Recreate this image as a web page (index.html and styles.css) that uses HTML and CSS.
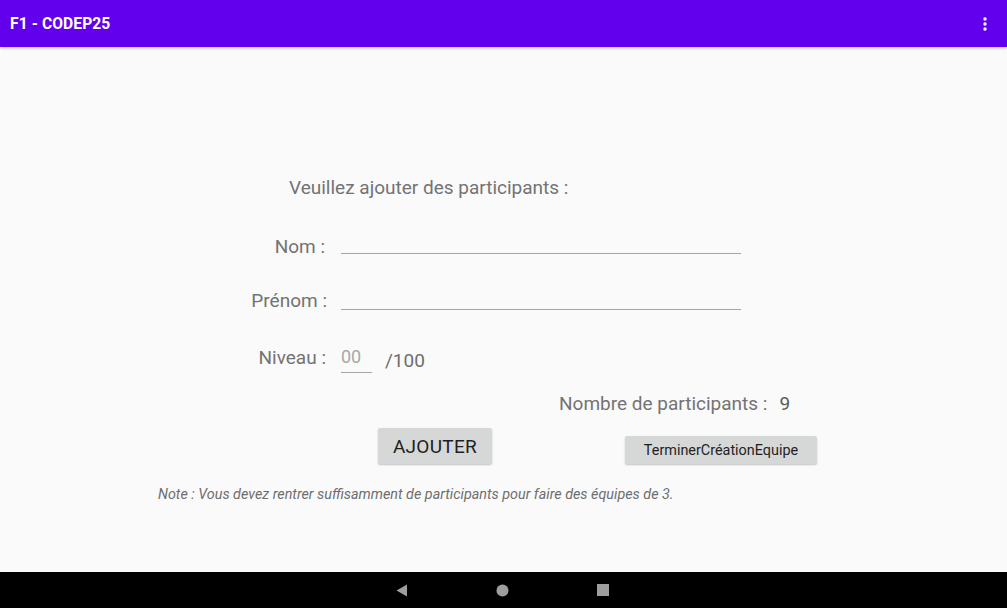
FILE: index.html
```html
<!DOCTYPE html>
<html lang="fr">
<head>
<meta charset="utf-8">
<title>F1 - CODEP25</title>
<link rel="stylesheet" href="styles.css">
</head>
<body>
<div class="screen">
  <header class="appbar">
    <span class="appbar-title">F1 - CODEP25</span>
    <svg class="appbar-menu" width="6" height="14" viewBox="0 0 6 14"><circle cx="3" cy="2" r="1.7" fill="#fff"/><circle cx="3" cy="7" r="1.7" fill="#fff"/><circle cx="3" cy="12" r="1.7" fill="#fff"/></svg>
  </header>
  <main class="content">
    <div class="heading">Veuillez ajouter des participants :</div>
    <div class="row row-nom">
      <span class="label">Nom :</span>
      <span class="field field-nom"></span>
    </div>
    <div class="row row-prenom">
      <span class="label">Prénom :</span>
      <span class="field field-prenom"></span>
    </div>
    <div class="row row-niveau">
      <span class="label">Niveau :</span>
      <span class="field field-niveau">00</span>
      <span class="max">/100</span>
    </div>
    <div class="row row-count">
      <span class="count-label">Nombre de participants :</span>
      <span class="count-value">9</span>
    </div>
    <div class="row row-buttons">
      <span class="btn btn-add">AJOUTER</span>
      <span class="btn btn-finish">TerminerCréationEquipe</span>
    </div>
    <div class="note">Note : Vous devez rentrer suffisamment de participants pour faire des équipes de 3.</div>
  </main>
  <nav class="navbar">
    <svg width="12" height="13" viewBox="0 0 12 13"><polygon points="11,0.5 11,12.5 0.5,6.5" fill="#9e9e9e"/></svg>
    <svg width="13" height="13" viewBox="0 0 13 13"><circle cx="6.5" cy="6.5" r="6" fill="#9e9e9e"/></svg>
    <svg width="12" height="12" viewBox="0 0 12 12"><rect x="0" y="0" width="12" height="12" fill="#9e9e9e"/></svg>
  </nav>
</div>
</body>
</html>
```

FILE: styles.css
```css
* { box-sizing: border-box; }
html, body { margin: 0; padding: 0; }
body {
  font-family: Roboto, "Liberation Sans", sans-serif;
  background: #fafafa;
}
.screen {
  width: 1007px;
  height: 608px;
  display: flex;
  flex-direction: column;
  overflow: hidden;
}
.appbar {
  height: 47px;
  flex: 0 0 47px;
  background: #6200ee;
  display: flex;
  align-items: center;
  justify-content: space-between;
  padding: 0 19px 0 10px;
  box-shadow: 0 1px 3px rgba(0,0,0,0.25);
  position: relative;
  z-index: 1;
}
.appbar-title {
  color: #fff;
  font-size: 15.6px;
  font-weight: 700;
  letter-spacing: 0.1px;
}
.content {
  flex: 1;
  background: #fafafa;
  padding-top: 129px;
  color: #737373;
  font-size: 19px;
}
.heading {
  margin-left: 289px;
  height: 24px;
  line-height: 24px;
}
.row {
  display: flex;
  align-items: flex-start;
}
.label {
  width: 327px;
  text-align: right;
  line-height: 24px;
  height: 24px;
  margin-right: 14px;
}
.field {
  display: block;
  border-bottom: 1px solid #a6a6a6;
}
.row-nom { margin-top: 35px; height: 24px; }
.row-nom .label { width: 325px; margin-right: 16px; }
.field-nom { width: 400px; height: 19px; }
.row-prenom { margin-top: 30px; height: 24px; }
.field-prenom { width: 400px; height: 21px; }
.row-niveau { margin-top: 33px; height: 27px; }
.row-niveau .label { width: 326px; margin-right: 15px; }
.field-niveau {
  width: 31px;
  height: 27px;
  line-height: 22px;
  color: #a8a8a8;
  font-size: 18px;
}
.max {
  margin-left: 13px;
  line-height: 24px;
  padding-top: 3px;
  color: #6e6e6e;
}
.row-count {
  margin-top: 19px;
  margin-left: 559px;
  line-height: 24px;
  height: 24px;
}
.count-value {
  margin-left: 12px;
  color: #5a5a5a;
}
.row-buttons {
  margin-top: 12px;
  height: 36px;
  align-items: flex-end;
}
.btn {
  display: flex;
  align-items: center;
  justify-content: center;
  background: #d6d7d7;
  border-radius: 2px;
  box-shadow: 0 1px 2px rgba(0,0,0,0.22);
  color: #1f1f1f;
}
.btn-add {
  margin-left: 378px;
  width: 114px;
  height: 36px;
  font-size: 19px;
  letter-spacing: 0.3px;
}
.btn-finish {
  margin-left: 133px;
  width: 192px;
  height: 28px;
  font-size: 14.4px;
}
.note {
  margin-top: 22px;
  margin-left: 158px;
  font-size: 14.35px;
  line-height: 18px;
  font-style: italic;
  color: #6e6e6e;
}
.navbar {
  flex: 0 0 36px;
  height: 36px;
  background: #000;
  display: flex;
  align-items: center;
  padding-left: 396px;
}
.navbar svg:nth-child(2) { margin-left: 88px; }
.navbar svg:nth-child(3) { margin-left: 88px; }
```
